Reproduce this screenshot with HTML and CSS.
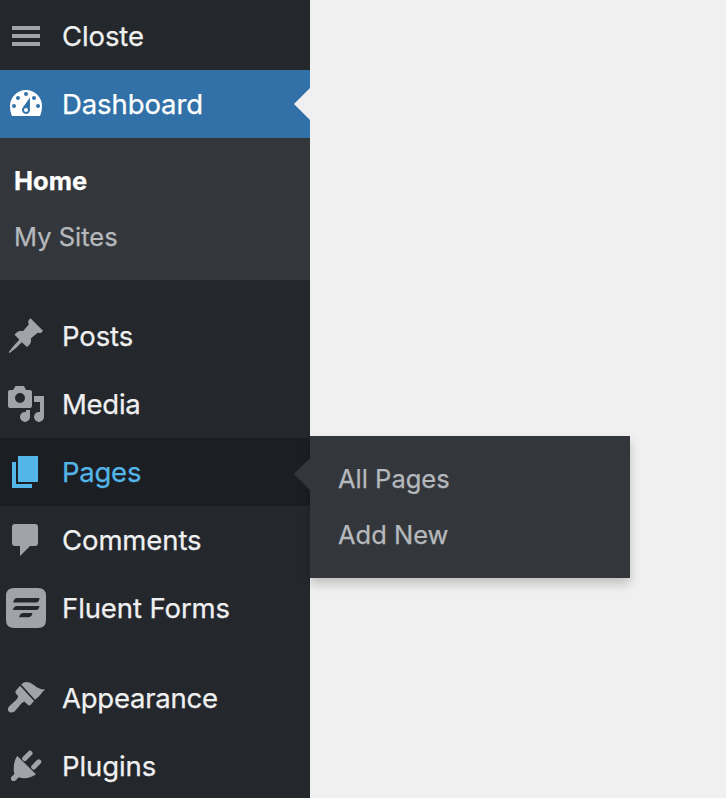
FILE: index.html
```
<!DOCTYPE html>
<html lang="en">
<head>
<meta charset="utf-8">
<title>Dashboard</title>
<link rel="stylesheet" href="styles.css">
</head>
<body>
<nav class="menu">
  <a class="item"><svg class="icon" viewBox="0 2 52 68"><path d="M12 26h28v4H12zm0 8h28v4H12zm0 8h28v4H12z"/></svg><span class="label closte">Closte</span></a>
  <a class="item current"><svg class="icon" viewBox="0 70 52 68"><path fill-rule="evenodd" d="M12 116C10.600 113 10 109 10 106A16 16 0 0 1 42 106C42 109 41.400 113 40 116ZM26 92a2 2 0 1 0 0 4a2 2 0 1 0 0-4ZM18 96a2 2 0 1 0 0 4a2 2 0 1 0 0-4ZM34 96a2 2 0 1 0 0 4a2 2 0 1 0 0-4ZM14 104a2 2 0 1 0 0 4a2 2 0 1 0 0-4ZM38 104a2 2 0 1 0 0 4a2 2 0 1 0 0-4ZM30 97.500L22.800 107.500A4 4 0 1 0 29.900 109ZM26 108a2 2 0 1 1 0 4a2 2 0 1 1 0-4Z"/></svg><span class="label dashboard">Dashboard</span></a>
  <div class="submenu"><a class="sub selected">Home</a><a class="sub sites">My Sites</a></div>
  <a class="item"><svg class="icon" viewBox="0 302 52 68"><path d="M30.500 318.300L43 330.800L41.200 332.700Q39.800 333.500 38 332.500L30.800 338.500Q31.800 342 29.200 345L27 347L21.800 342.200Q16 348.800 9.500 353Q8.500 352.800 9 351.800Q13.500 345.500 19.300 339.700L14.500 334.500L16.600 332.500Q19.500 330 23 331.200L28.700 324.500Q27.800 322 28.600 320.300Z"/></svg><span class="label posts">Posts</span></a>
  <a class="item"><svg class="icon" viewBox="0 370 52 68"><path fill-rule="evenodd" d="M10 390H13L15.500 386H24L26 390H30Q32 390 32 392V406Q32 408 30 408H10Q8 408 8 406V392Q8 390 10 390ZM20 393a5 5 0 1 0 0 10a5 5 0 1 0 0-10Z"/><path d="M34 396H44V417A5 5 0 1 1 40 412V402H34ZM26 410H30V417A5 5 0 1 1 26 412Z"/></svg><span class="label media">Media</span></a>
  <div class="item hovered"><svg class="icon" viewBox="0 438 52 68"><path d="M18 456H38V482H18ZM12 462H16V484H32V488H12Z"/></svg><span class="label pages">Pages</span>
    <div class="flyout"><a class="sub all">All Pages</a><a class="sub add">Add New</a></div>
  </div>
  <a class="item"><svg class="icon" viewBox="0 506 52 68"><path d="M15 524H35Q38 524 38 527V543Q38 546 35 546H30L20 556V546H15Q12 546 12 543V527Q12 524 15 524Z"/></svg><span class="label comments">Comments</span></a>
  <a class="item"><svg class="icon" viewBox="0 574 52 68"><path fill-rule="evenodd" d="M14 588H38Q46 588 46 596V620Q46 628 38 628H14Q6 628 6 620V596Q6 588 14 588ZM17 598Q14 598 13.200 602.500H36Q39 602.500 39.500 598ZM17 606Q14 606 12.800 610H36Q39 610 39.500 606ZM23.500 613Q20 613 19 617.300H28.500Q31.500 617.300 32.500 613Z"/></svg><span class="label fluent">Fluent Forms</span></a>
  <a class="item separated"><svg class="icon" viewBox="0 664 52 68"><path d="M21.200 684.500Q24 681.500 28 682.200C34 683 37 690 45.200 689.500Q42.500 691.500 41 694Q38.500 697 35 699.800ZM20 685.800L34 700.900L30.500 705Q29 706 27.800 704.700L24.300 701.500C21 702.500 17 709.500 14.500 711.500C10.500 714.500 6 711 8.800 706.800C10.500 704.500 17.500 700 18.200 696.200L15.700 693.200Q14.900 691.700 16 690.500Z"/></svg><span class="label appearance">Appearance</span></a>
  <a class="item"><svg class="icon" viewBox="0 732 52 68"><path d="M17.300 756L36 774.300C32 777.700 24 779.500 18.800 777.200L15.500 780.500Q13.500 782 11.600 780.400Q10.200 778.600 11.500 776.800L14.400 774C12.800 769 14 760 17.300 756Z"/><path class="prongs" d="M24.700 758.500L30 753.200M33.700 767L38.800 761.800"/></svg><span class="label plugins">Plugins</span></a>
</nav>
</body>
</html>
```
FILE: styles.css
```
body {
  margin: 0;
  background: #f0f0f1;
  font-family: Inter, "Liberation Sans", sans-serif;
  overflow: hidden;
}
.menu {
  box-sizing: border-box;
  width: 310px;
  height: 798px;
  padding-top: 2px;
  background: #24282d;
}
.item {
  position: relative;
  display: flex;
  align-items: center;
  height: 68px;
  color: #f0f0f1;
  font-size: 27.5px;
  line-height: 36px;
}
.icon {
  flex: none;
  width: 52px;
  height: 68px;
  margin-right: 10px;
  fill: #a0a4a9;
}
.prongs {
  fill: none;
  stroke: #a0a4a9;
  stroke-width: 5;
  stroke-linecap: round;
}
.label, .sub {
  white-space: nowrap;
  -webkit-text-stroke: 0.25px currentColor;
}
.label { letter-spacing: -0.1px; }
.media, .appearance, .pages { letter-spacing: -0.25px; }
.current { background: #3171a7; color: #fff; }
.current .icon { fill: #fff; }
.current::after, .hovered::after {
  content: "";
  position: absolute;
  right: 0;
  top: 18px;
  border: 16px solid transparent;
  border-left: 0;
  border-right-color: #f0f0f1;
}
.submenu {
  box-sizing: border-box;
  height: 142px;
  padding: 15px 14px;
  margin-bottom: 22px;
  background: #33373b;
}
.sub {
  display: block;
  height: 56px;
  color: #b5b9bd;
  font-size: 25.5px;
  line-height: 56px;
}
.selected { color: #fff; font-weight: 700; }
.hovered { background: #1b1e22; color: #54b5e8; }
.hovered .icon { fill: #54b5e8; }
.hovered::after { top: 20px; border-right-color: #33373b; }
.flyout {
  position: absolute;
  left: 310px;
  top: -2px;
  box-sizing: border-box;
  width: 320px;
  height: 142px;
  padding: 15px 28px;
  background: #33373b;
  box-shadow: 0 6px 10px rgba(0, 0, 0, .2);
}
.separated { margin-top: 22px; }
```
